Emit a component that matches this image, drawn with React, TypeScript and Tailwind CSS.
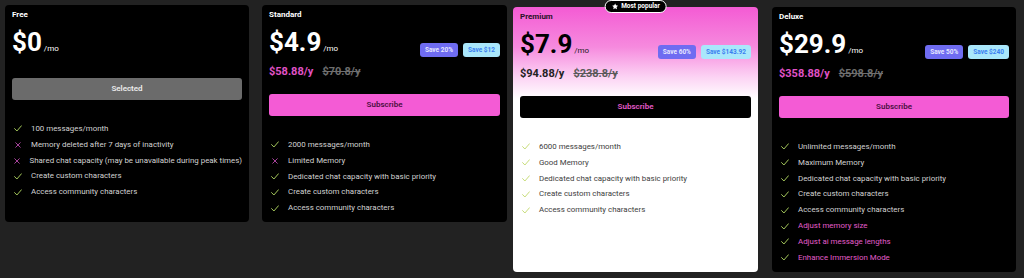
import React from "react";

type Feature = { text: string; ok: boolean; pink?: boolean };

const Check = ({ color }: { color: string }) => (
  <svg width="8" height="7" viewBox="0 0 8 7" fill="none">
    <path d="M0.6 3.6 L2.9 6 L7.4 0.8" stroke={color} strokeWidth="1" strokeLinecap="round" strokeLinejoin="round" />
  </svg>
);

const Cross = () => (
  <svg width="6" height="6" viewBox="0 0 6 6" fill="none">
    <path d="M0.7 0.7 L5.3 5.3 M5.3 0.7 L0.7 5.3" stroke="#b84aab" strokeWidth="0.9" strokeLinecap="round" />
  </svg>
);

const FeatureList = ({ items, light }: { items: Feature[]; light?: boolean }) => (
  <div className="mt-[21px] flex flex-col">
    {items.map((f, i) => (
      <div key={i} className="flex h-[15.85px] items-center pl-[2px]">
        <span className="flex w-[8px] justify-center">
          {f.ok ? <Check color={light ? "#c7dc7a" : "#a3c65a"} /> : <Cross />}
        </span>
        <span
          className={
            "ml-[9px] whitespace-nowrap text-[7.9px] leading-[12px] " +
            (f.pink ? "text-[#e25ccb]" : light ? "text-[#3d3d3d]" : "text-[#d2d2d2]")
          }
        >
          {f.text}
        </span>
      </div>
    ))}
  </div>
);

const Badges = ({ pct, amt }: { pct: string; amt: string }) => (
  <div className="flex gap-[5px]">
    <span className="flex h-[14px] items-center rounded-[3px] bg-[#6f6cf1] px-[5px] text-[6.5px] font-bold leading-none text-[#e6e6ff]">
      {pct}
    </span>
    <span className="flex h-[14px] items-center rounded-[3px] bg-[#a9e7fb] px-[5px] text-[6.5px] font-bold leading-none text-[#3b7ff0]">
      {amt}
    </span>
  </div>
);

const Price = ({ value, dark }: { value: string; dark?: boolean }) => (
  <div className="flex items-baseline">
    <span className={"text-[26px] font-bold leading-[30px] " + (dark ? "text-black" : "text-white")}>{value}</span>
    <span className={"ml-[2px] text-[8px] " + (dark ? "text-[#222]" : "text-white")}>/mo</span>
  </div>
);

export default function App() {
  const font = { fontFamily: "Roboto, 'Liberation Sans', sans-serif" };
  return (
    <div className="flex h-[278px] w-full items-start bg-[#222222] pl-[5px] pt-[5px]" style={font}>
      {/* Free */}
      <div className="flex h-[217px] w-[244px] flex-col rounded-[4px] bg-black px-[7px] pt-[5px]">
        <div className="text-[8px] font-bold leading-[10px] text-white">Free</div>
        <div className="mt-[7px] flex h-[30px] items-end justify-between">
          <Price value="$0" />
        </div>
        <div className="mt-[21px] flex h-[22px] items-center justify-center rounded-[3px] bg-[#6b6b6b] text-[8px] font-semibold text-[#ececec]">
          Selected
        </div>
        <FeatureList
          items={[
            { text: "100 messages/month", ok: true },
            { text: "Memory deleted after 7 days of inactivity", ok: false },
            { text: "Shared chat capacity (may be unavailable during peak times)", ok: false },
            { text: "Create custom characters", ok: true },
            { text: "Access community characters", ok: true },
          ]}
        />
      </div>

      {/* Standard */}
      <div className="ml-[13px] flex h-[217px] w-[245px] flex-col rounded-[4px] bg-black px-[7px] pt-[5px]">
        <div className="text-[8px] font-bold leading-[10px] text-white">Standard</div>
        <div className="mt-[7px] flex h-[30px] items-end justify-between">
          <Price value="$4.9" />
          <Badges pct="Save 20%" amt="Save $12" />
        </div>
        <div className="mt-[8px] flex h-[14px] items-center text-[11px] font-bold leading-[14px]">
          <span className="text-[#e052c7]">$58.88/y</span>
          <span className="ml-[9px] text-[#6e6e6e] line-through">$70.8/y</span>
        </div>
        <div className="mt-[15px] flex h-[22px] items-center justify-center rounded-[3px] bg-[#f45bd5] text-[8px] font-semibold text-[#4a0f3f]">
          Subscribe
        </div>
        <FeatureList
          items={[
            { text: "2000 messages/month", ok: true },
            { text: "Limited Memory", ok: false },
            { text: "Dedicated chat capacity with basic priority", ok: true },
            { text: "Create custom characters", ok: true },
            { text: "Access community characters", ok: true },
          ]}
        />
      </div>

      {/* Premium */}
      <div className="relative ml-[6px] mt-[2px] flex h-[265px] w-[245px] flex-col rounded-[4px] bg-[linear-gradient(180deg,#f45bd4_0px,#f68ade_40px,#fcd3f4_70px,#ffffff_92px)] px-[7px] pt-[5px]">
        <div className="absolute left-1/2 top-[-7px] flex h-[13px] -translate-x-1/2 items-center gap-[3px] rounded-full border border-white bg-black px-[6px]">
          <svg width="7" height="7" viewBox="0 0 24 24" fill="white">
            <path d="M12 1.5l3.1 6.6 7.2.9-5.3 5 1.4 7.1L12 17.6l-6.4 3.5L7 14 1.7 9l7.2-.9z" />
          </svg>
          <span className="whitespace-nowrap text-[6.5px] font-bold leading-none text-white">Most popular</span>
        </div>
        <div className="text-[8px] font-bold leading-[10px] text-[#2b1228]">Premium</div>
        <div className="mt-[7px] flex h-[30px] items-end justify-between">
          <Price value="$7.9" dark />
          <Badges pct="Save 60%" amt="Save $143.92" />
        </div>
        <div className="mt-[8px] flex h-[14px] items-center text-[11px] font-bold leading-[14px]">
          <span className="text-[#222]">$94.88/y</span>
          <span className="ml-[9px] text-[#5a5a5a] line-through">$238.8/y</span>
        </div>
        <div className="mt-[15px] flex h-[22px] items-center justify-center rounded-[3px] bg-black text-[8px] font-semibold text-[#e45bcb]">
          Subscribe
        </div>
        <FeatureList
          light
          items={[
            { text: "6000 messages/month", ok: true },
            { text: "Good Memory", ok: true },
            { text: "Dedicated chat capacity with basic priority", ok: true },
            { text: "Create custom characters", ok: true },
            { text: "Access community characters", ok: true },
          ]}
        />
      </div>

      {/* Deluxe */}
      <div className="ml-[14px] mt-[2px] flex h-[265px] w-[244px] flex-col rounded-[4px] bg-black px-[7px] pt-[5px]">
        <div className="text-[8px] font-bold leading-[10px] text-white">Deluxe</div>
        <div className="mt-[7px] flex h-[30px] items-end justify-between">
          <Price value="$29.9" />
          <Badges pct="Save 50%" amt="Save $240" />
        </div>
        <div className="mt-[8px] flex h-[14px] items-center text-[11px] font-bold leading-[14px]">
          <span className="text-[#e052c7]">$358.88/y</span>
          <span className="ml-[9px] text-[#6e6e6e] line-through">$598.8/y</span>
        </div>
        <div className="mt-[15px] flex h-[22px] items-center justify-center rounded-[3px] bg-[#f45bd5] text-[8px] font-semibold text-[#4a0f3f]">
          Subscribe
        </div>
        <FeatureList
          items={[
            { text: "Unlimited messages/month", ok: true },
            { text: "Maximum Memory", ok: true },
            { text: "Dedicated chat capacity with basic priority", ok: true },
            { text: "Create custom characters", ok: true },
            { text: "Access community characters", ok: true },
            { text: "Adjust memory size", ok: true, pink: true },
            { text: "Adjust ai message lengths", ok: true, pink: true },
            { text: "Enhance Immersion Mode", ok: true, pink: true },
          ]}
        />
      </div>
    </div>
  );
}
